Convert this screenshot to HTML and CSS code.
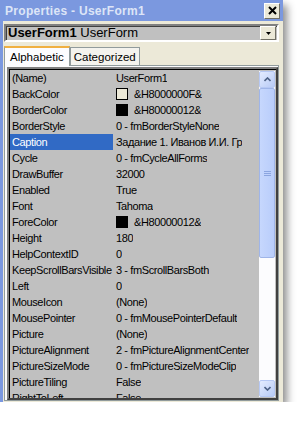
FILE: index.html
```html
<!DOCTYPE html>
<html lang="ru">
<head>
    <meta charset="UTF-8">
    <title>Properties - UserForm1</title>
    <link rel="stylesheet" href="styles.css">
</head>
<body>
    <div class="window">
        <div class="titlebar">
            <span class="title">Properties - UserForm1</span>
            <span class="close-btn">
                <svg width="9" height="9" viewBox="0 0 9 9"><path d="M1 1 L8 8 M8 1 L1 8" stroke="#000" stroke-width="2"/></svg>
            </span>
        </div>

        <div class="object-box">
            <span class="object-name"><b>UserForm1</b> UserForm</span>
            <span class="drop-btn">
                <svg width="5" height="3" viewBox="0 0 5 3"><path d="M0 0 H5 L2.5 3 Z" fill="#000"/></svg>
            </span>
        </div>

        <div class="tabs">
            <div class="tab active">Alphabetic</div>
            <div class="tab">Categorized</div>
        </div>

        <div class="panel">
            <div class="grid">
                <div class="rows">
                    <div class="row"><span class="name">(Name)</span><span class="value">UserForm1</span></div>
                    <div class="row"><span class="name">BackColor</span><span class="value"><i class="swatch light"></i>&amp;H8000000F&amp;</span></div>
                    <div class="row"><span class="name">BorderColor</span><span class="value"><i class="swatch"></i>&amp;H80000012&amp;</span></div>
                    <div class="row"><span class="name">BorderStyle</span><span class="value">0 - fmBorderStyleNone</span></div>
                    <div class="row selected"><span class="name">Caption</span><span class="value">Задание 1. Иванов И.И. Гр</span></div>
                    <div class="row"><span class="name">Cycle</span><span class="value">0 - fmCycleAllForms</span></div>
                    <div class="row"><span class="name">DrawBuffer</span><span class="value">32000</span></div>
                    <div class="row"><span class="name">Enabled</span><span class="value">True</span></div>
                    <div class="row"><span class="name">Font</span><span class="value">Tahoma</span></div>
                    <div class="row"><span class="name">ForeColor</span><span class="value"><i class="swatch"></i>&amp;H80000012&amp;</span></div>
                    <div class="row"><span class="name">Height</span><span class="value">180</span></div>
                    <div class="row"><span class="name">HelpContextID</span><span class="value">0</span></div>
                    <div class="row"><span class="name">KeepScrollBarsVisible</span><span class="value">3 - fmScrollBarsBoth</span></div>
                    <div class="row"><span class="name">Left</span><span class="value">0</span></div>
                    <div class="row"><span class="name">MouseIcon</span><span class="value">(None)</span></div>
                    <div class="row"><span class="name">MousePointer</span><span class="value">0 - fmMousePointerDefault</span></div>
                    <div class="row"><span class="name">Picture</span><span class="value">(None)</span></div>
                    <div class="row"><span class="name">PictureAlignment</span><span class="value">2 - fmPictureAlignmentCenter</span></div>
                    <div class="row"><span class="name">PictureSizeMode</span><span class="value">0 - fmPictureSizeModeClip</span></div>
                    <div class="row"><span class="name">PictureTiling</span><span class="value">False</span></div>
                    <div class="row"><span class="name">RightToLeft</span><span class="value">False</span></div>
                </div>
                <div class="scrollbar">
                    <div class="sb-btn">
                        <svg width="7" height="5" viewBox="0 0 7 5"><path d="M0.5 4 L3.5 1 L6.5 4" stroke="#4d6185" stroke-width="1.6" fill="none"/></svg>
                    </div>
                    <div class="sb-thumb">
                        <svg width="7" height="7" viewBox="0 0 7 7"><path d="M0 1.5 H7 M0 3.5 H7 M0 5.5 H7" stroke="#8ba5e0" stroke-width="1"/></svg>
                    </div>
                    <div class="sb-track"></div>
                    <div class="sb-btn">
                        <svg width="7" height="5" viewBox="0 0 7 5"><path d="M0.5 1 L3.5 4 L6.5 1" stroke="#4d6185" stroke-width="1.6" fill="none"/></svg>
                    </div>
                </div>
            </div>
        </div>
    </div>
</body>
</html>
```

FILE: styles.css
```css
body {
    margin: 0;
    background-color: #ffffff;
    font-family: "Liberation Sans", sans-serif;
    font-size: 11px;
}

.window {
    width: 280px;
    height: 402px;
    background-color: #ece9d8;
    border-left: 3px solid #7b98df;
    box-shadow: 4px 5px 8px rgba(0, 0, 0, 0.45);
    display: flex;
    flex-direction: column;
    overflow: hidden;
}

/* title */
.titlebar {
    height: 21px;
    margin-left: -3px;
    padding-left: 5px;
    background-color: #7b98df;
    display: flex;
    align-items: center;
    justify-content: space-between;
    flex-shrink: 0;
}
.title {
    color: #dde5f7;
    font-weight: bold;
    font-size: 12px;
    letter-spacing: 0.3px;
}
.close-btn {
    width: 14px;
    height: 14px;
    margin-right: 3px;
    background-color: #ece9d8;
    border: 1px solid;
    border-color: #ffffff #716f64 #716f64 #ffffff;
    display: flex;
    align-items: center;
    justify-content: center;
}

/* object combo */
.object-box {
    height: 14px;
    margin: 3px 4px 0 1px;
    background-color: #c0c0c0;
    border: 2px solid;
    border-color: #808080 #ffffff #ffffff #808080;
    box-shadow: inset 1px 1px 0 #404040;
    display: flex;
    align-items: center;
    justify-content: space-between;
    flex-shrink: 0;
    overflow: hidden;
}
.object-name {
    padding-left: 2px;
    color: #000;
    font-size: 13px;
    line-height: 14px;
}
.drop-btn {
    width: 14px;
    height: 12px;
    margin-right: 1px;
    background-color: #ece9d8;
    border: 1px solid;
    border-color: #ffffff #716f64 #716f64 #ffffff;
    display: flex;
    align-items: center;
    justify-content: center;
}

/* tabs */
.tabs {
    display: flex;
    align-items: flex-end;
    margin: 3px 0 0 1px;
    height: 20px;
    flex-shrink: 0;
}
.tab {
    height: 17px;
    padding: 0 3px;
    border: 1px solid #919b9c;
    border-bottom: none;
    background-color: #f4f3ee;
    color: #000;
    font-size: 11.5px;
    line-height: 18px;
}
.tab.active {
    height: 18px;
    padding: 0 5px;
    background-color: #fcfcfe;
    position: relative;
    z-index: 1;
    margin-bottom: -1px;
    border-top: 2px solid #f0b040;
}

/* panel and grid */
.panel {
    flex: 1;
    margin: 0 4px 1px 1px;
    border: 1px solid #919b9c;
    background-color: #fcfcfe;
    padding: 1px 0 0 2px;
    display: flex;
    min-height: 0;
}
.grid {
    flex: 1;
    border: 2px solid;
    border-color: #808080 #404040 #404040 #808080;
    box-shadow: inset 1px 1px 0 #000;
    background-color: #c0c0c0;
    display: flex;
    overflow: hidden;
}
.rows {
    flex: 1;
    padding: 1px 0 0 1px;
    overflow: hidden;
}
.row {
    height: 16px;
    display: flex;
    align-items: center;
    white-space: nowrap;
    font-size: 11px;
    letter-spacing: -0.4px;
    color: #000;
}
.name {
    width: 101px;
    height: 16px;
    line-height: 16px;
    padding-left: 2px;
    flex-shrink: 0;
}
.value {
    padding-left: 3px;
    display: flex;
    align-items: center;
    overflow: hidden;
}
.row.selected .name {
    background-color: #316ac5;
    color: #ffffff;
}
.swatch {
    display: inline-block;
    width: 10px;
    height: 10px;
    margin-right: 6px;
    background-color: #000;
    border: 1px solid #000;
}
.swatch.light {
    background-color: #ece9d8;
}

/* scrollbar */
.scrollbar {
    width: 16px;
    margin: 2px 1px 1px 0;
    background-color: #fcfcfe;
    display: flex;
    flex-direction: column;
}
.sb-btn {
    height: 17px;
    background: linear-gradient(135deg, #e4ecff, #b8cbf6);
    border: 1px solid #b6c8f4;
    border-radius: 2px;
    display: flex;
    align-items: center;
    justify-content: center;
    box-sizing: border-box;
}
.sb-thumb {
    height: 170px;
    background: linear-gradient(90deg, #c6d7fd, #b9cdfb);
    border: 1px solid #9fb5e8;
    border-radius: 2px;
    display: flex;
    align-items: center;
    justify-content: center;
    box-sizing: border-box;
}
.sb-track {
    flex: 1;
    background-color: #fcfcfe;
}
```
